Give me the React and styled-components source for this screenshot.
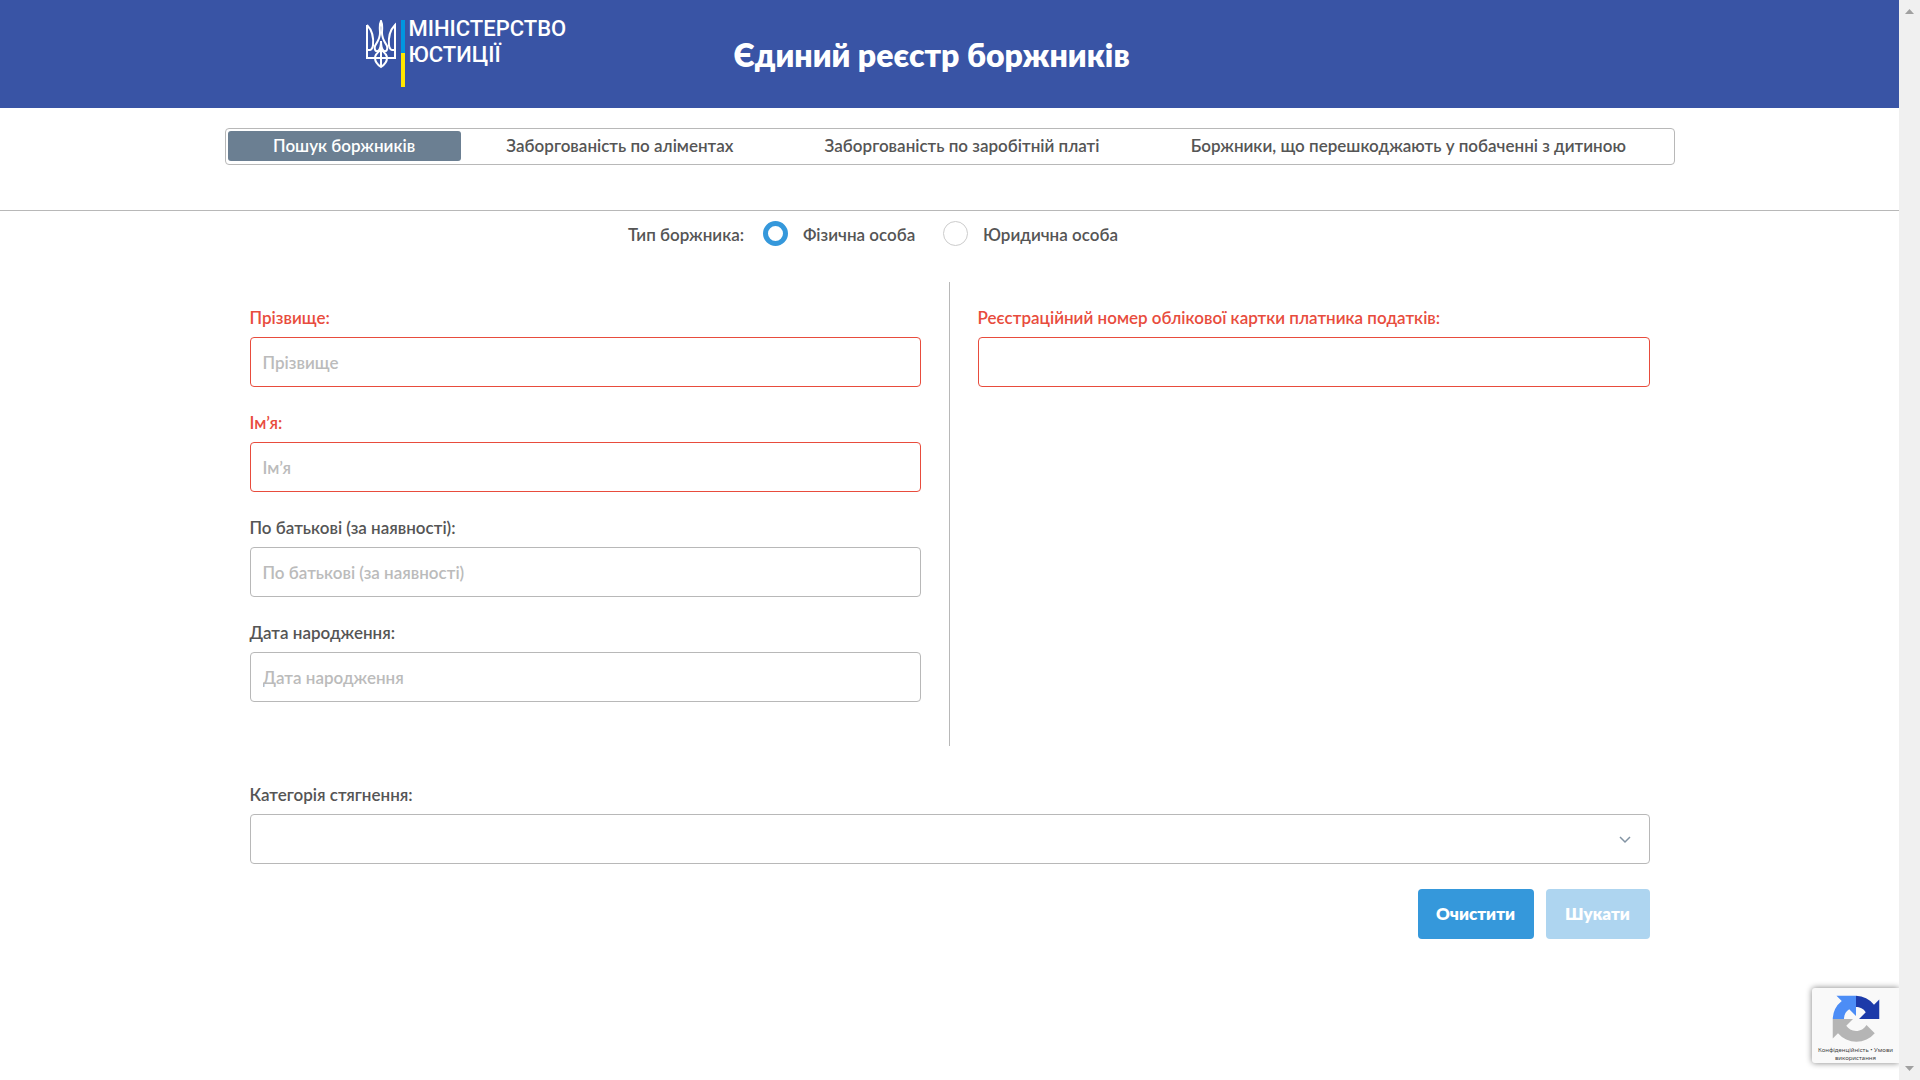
import { useState } from "react";
import styled, { createGlobalStyle, css } from "styled-components";

const colors = {
  header: "#3954a5",
  text: "#555555",
  line: "#b8b8b8",
  placeholder: "#bbbbbb",
  error: "#e84c3d",
  primary: "#3598db",
  tab: "#6b7f92",
};

const GlobalStyle = createGlobalStyle`
  *, *::before, *::after {
    box-sizing: border-box;
  }

  body {
    margin: 0;
    background: #fff;
    color: ${colors.text};
    font: 600 17px/24px Lato, "Noto Sans", sans-serif;
  }

  button, input, select {
    font: inherit;
    color: inherit;
  }
`;

const Shell = styled.div`
  display: flex;
  min-height: 100vh;
`;

const Page = styled.div`
  position: relative;
  flex: 1;
  min-width: 0;
  overflow-x: hidden;
`;

const ScrollTrack = styled.div`
  display: flex;
  flex-direction: column;
  justify-content: space-between;
  align-items: center;
  width: 21px;
  padding: 9px 0;
  background: #f0f0f0;
`;

const Header = styled.header`
  height: 108px;
  background: ${colors.header};
  color: #fff;
`;

const HeaderInner = styled.div`
  display: flex;
  max-width: 1168px;
  height: 100%;
  margin: 0 auto;
`;

const Brand = styled.a`
  display: flex;
  align-items: flex-start;
  width: 368px;
  padding-top: 20px;
  color: #fff;
  text-decoration: none;
`;

const BrandName = styled.span`
  margin-top: -4px;
  padding-left: 4px;
  font: 500 22px/26px Roboto, sans-serif;
`;

const Flag = styled.span`
  width: 4px;
  height: 67px;
  margin-left: 5px;
  background: linear-gradient(#0096e0 50%, #ffe600 50%);
`;

const Title = styled.h1`
  margin: 0;
  font-size: 32px;
  font-weight: 800;
  line-height: 110px;
`;

const Container = styled.div`
  max-width: 1450px;
  margin: 0 auto;
`;

const TabsBar = styled.div`
  padding: 20px 0 45px;
  border-bottom: 1px solid ${colors.line};
`;

const Tabs = styled.nav`
  display: flex;
  padding: 2px 2px 3px;
  border: 1px solid ${colors.line};
  border-radius: 4px;
`;

const Tab = styled.button`
  flex: 1 1 auto;
  height: 30px;
  padding: 0;
  border: 0;
  border-radius: 3px;
  background: none;
  cursor: pointer;

  ${({ $active }) =>
    $active &&
    css`
      background: ${colors.tab};
      color: #fff;
    `}
`;

const DebtorType = styled.fieldset`
  display: flex;
  justify-content: center;
  margin: 0;
  padding: 10px 152px 0 0;
  border: 0;
  line-height: 28px;
`;

const TypeCaption = styled.span`
  width: 135px;
`;

const RadioLabel = styled.label`
  display: flex;
  gap: 15px;
  min-width: 180px;
  white-space: nowrap;

  &:last-child {
    min-width: 176px;
  }
`;

const Radio = styled.input`
  appearance: none;
  width: 25px;
  height: 25px;
  margin: 0;
  border: 1px solid #ccc;
  border-radius: 50%;

  &:checked {
    border: 5px solid ${colors.primary};
  }
`;

const Form = styled.form`
  padding: 33px 25px 0;
`;

const Columns = styled.div`
  display: grid;
  grid-template-columns: 1fr 1fr;
`;

const Column = styled.div`
  display: flex;
  flex-direction: column;
  gap: 24px;
  padding: 24px 0 44px 28px;

  &:first-child {
    padding: 24px 28px 44px 0;
    border-right: 1px solid ${colors.line};
  }
`;

const FieldBox = styled.div`
  color: ${({ $error }) => ($error ? colors.error : colors.text)};
`;

const Label = styled.label`
  display: block;
  height: 25px;
  margin-bottom: 6px;
`;

const control = css`
  display: block;
  width: 100%;
  height: 50px;
  padding: 0 12px;
  border: 1px solid ${({ $error }) => ($error ? colors.error : colors.line)};
  border-radius: 4px;
  background: #fff;
  outline: none;
`;

const Input = styled.input`
  ${control}

  &::placeholder {
    color: ${colors.placeholder};
    opacity: 1;
  }
`;

const Category = styled.div`
  padding-top: 37px;
`;

const SelectBox = styled.div`
  position: relative;

  svg {
    position: absolute;
    right: 19px;
    top: 22px;
    pointer-events: none;
  }
`;

const Select = styled.select`
  ${control}
  appearance: none;
`;

const Actions = styled.div`
  display: flex;
  justify-content: flex-end;
  gap: 12px;
  padding: 25px 0;
`;

const Button = styled.button`
  height: 50px;
  min-width: ${({ $wide }) => ($wide ? 116 : 104)}px;
  border: 0;
  border-radius: 4px;
  background: ${colors.primary};
  color: #fff;
  font-weight: 800;

  &:disabled {
    background: #aed5f0;
  }
`;

const Captcha = styled.aside`
  position: absolute;
  right: 0;
  bottom: 17px;
  display: flex;
  flex-direction: column;
  align-items: center;
  width: 87px;
  height: 75px;
  padding-top: 7px;
  border-radius: 3px 0 0 3px;
  background: #f9f9f9;
  box-shadow: 0 0 6px #808080;
  color: #444;
  font: 400 6px/8px "Noto Sans", sans-serif;
  text-align: center;
  white-space: nowrap;

  span {
    padding-top: 3px;
  }

  a {
    color: inherit;
    text-decoration: none;
  }
`;

const Trident = () => (
  <svg width="30" height="49" viewBox="0 0 30 49" fill="none" stroke="#fff" strokeWidth="2">
    <path d="M15 1C13 5 14 9 14 13C14 19 11 22 9 26C8 30 10 32 12 31C15 29 15 25 15 21C15 25 15 29 18 31C20 32 22 30 21 26C19 22 16 19 16 13C16 9 17 5 15 1Z" />
    <path d="M1 5V38H29V5C24 10 22 16 23 26M1 5C6 10 8 16 7 26M1 30H4C5 30 7 28 7 25M29 30H26C25 30 23 28 23 25M15 22V46" />
    <path d="M9 38C9 42 12 45 15 47C18 45 21 42 21 38C21 34 18 32 15 30C12 32 9 34 9 38Z" />
  </svg>
);

const Arrow = ({ down }) => (
  <svg width="9" height="5" viewBox="0 0 9 5" fill="#a0a0a0">
    <path d={down ? "M0 0H9L4.500 5Z" : "M0 5H9L4.500 0Z"} />
  </svg>
);

const Chevron = () => (
  <svg width="12" height="8" viewBox="0 0 12 8" fill="none" stroke="#8293a3" strokeWidth="1.500">
    <path d="M1 1L6 6L11 1" />
  </svg>
);

const CaptchaLogo = () => (
  <svg width="48" height="48" viewBox="0 0 64 64">
    <path fill="#1c3aa9" d="M63 32V6l-7 7A32 32 0 0 0 32 1v15c5 0 10 2 13 7L36 32Z" />
    <path fill="#4c8df6" d="M32 1H6l7 7A32 32 0 0 0 1 32h15c0-5 2-10 7-13l9 9Z" />
    <path fill="#b5b5b5" d="M1 32v26l7-7A32 32 0 0 0 57 51L46 40c-3 5-8 8-14 8-6 0-10-3-13-7l9-9Z" />
  </svg>
);

const Field = ({ id, label, placeholder, error }) => (
  <FieldBox $error={error}>
    <Label htmlFor={id}>{label}</Label>
    <Input id={id} placeholder={placeholder} $error={error} />
  </FieldBox>
);

const tabs = [
  "Пошук боржників",
  "Заборгованість по аліментах",
  "Заборгованість по заробітній платі",
  "Боржники, що перешкоджають у побаченні з дитиною",
];

const types = ["Фізична особа", "Юридична особа"];

const App = () => {
  const [tab, setTab] = useState(0);
  const [type, setType] = useState(0);

  return (
    <Shell>
      <GlobalStyle />
      <Page>
        <Header>
          <HeaderInner>
            <Brand href="#">
              <Trident />
              <Flag />
              <BrandName>
                МІНІСТЕРСТВО
                <br />
                ЮСТИЦІЇ
              </BrandName>
            </Brand>
            <Title>Єдиний реєстр боржників</Title>
          </HeaderInner>
        </Header>
        <TabsBar>
          <Container>
            <Tabs>
              {tabs.map((name, i) => (
                <Tab key={name} type="button" $active={i === tab} onClick={() => setTab(i)}>
                  {name}
                </Tab>
              ))}
            </Tabs>
          </Container>
        </TabsBar>
        <Container>
          <DebtorType>
            <TypeCaption>Тип боржника:</TypeCaption>
            {types.map((name, i) => (
              <RadioLabel key={name}>
                <Radio type="radio" name="type" checked={i === type} onChange={() => setType(i)} />
                {name}
              </RadioLabel>
            ))}
          </DebtorType>
          <Form>
            <Columns>
              <Column>
                <Field id="surname" label="Прізвище:" placeholder="Прізвище" error />
                <Field id="name" label="Ім’я:" placeholder="Ім’я" error />
                <Field
                  id="patronymic"
                  label="По батькові (за наявності):"
                  placeholder="По батькові (за наявності)"
                />
                <Field id="birthday" label="Дата народження:" placeholder="Дата народження" />
              </Column>
              <Column>
                <Field id="code" label="Реєстраційний номер облікової картки платника податків:" error />
              </Column>
            </Columns>
            <Category>
              <Label htmlFor="category">Категорія стягнення:</Label>
              <SelectBox>
                <Select id="category">
                  <option value="" />
                </Select>
                <Chevron />
              </SelectBox>
            </Category>
            <Actions>
              <Button type="reset" $wide>
                Очистити
              </Button>
              <Button type="submit" disabled>
                Шукати
              </Button>
            </Actions>
          </Form>
        </Container>
        <Captcha>
          <CaptchaLogo />
          <span>
            <a href="#privacy">Конфіденційність</a> •{" "}
            <a href="#terms">
              Умови
              <br />
              використання
            </a>
          </span>
        </Captcha>
      </Page>
      <ScrollTrack>
        <Arrow />
        <Arrow down />
      </ScrollTrack>
    </Shell>
  );
};

export default App;
